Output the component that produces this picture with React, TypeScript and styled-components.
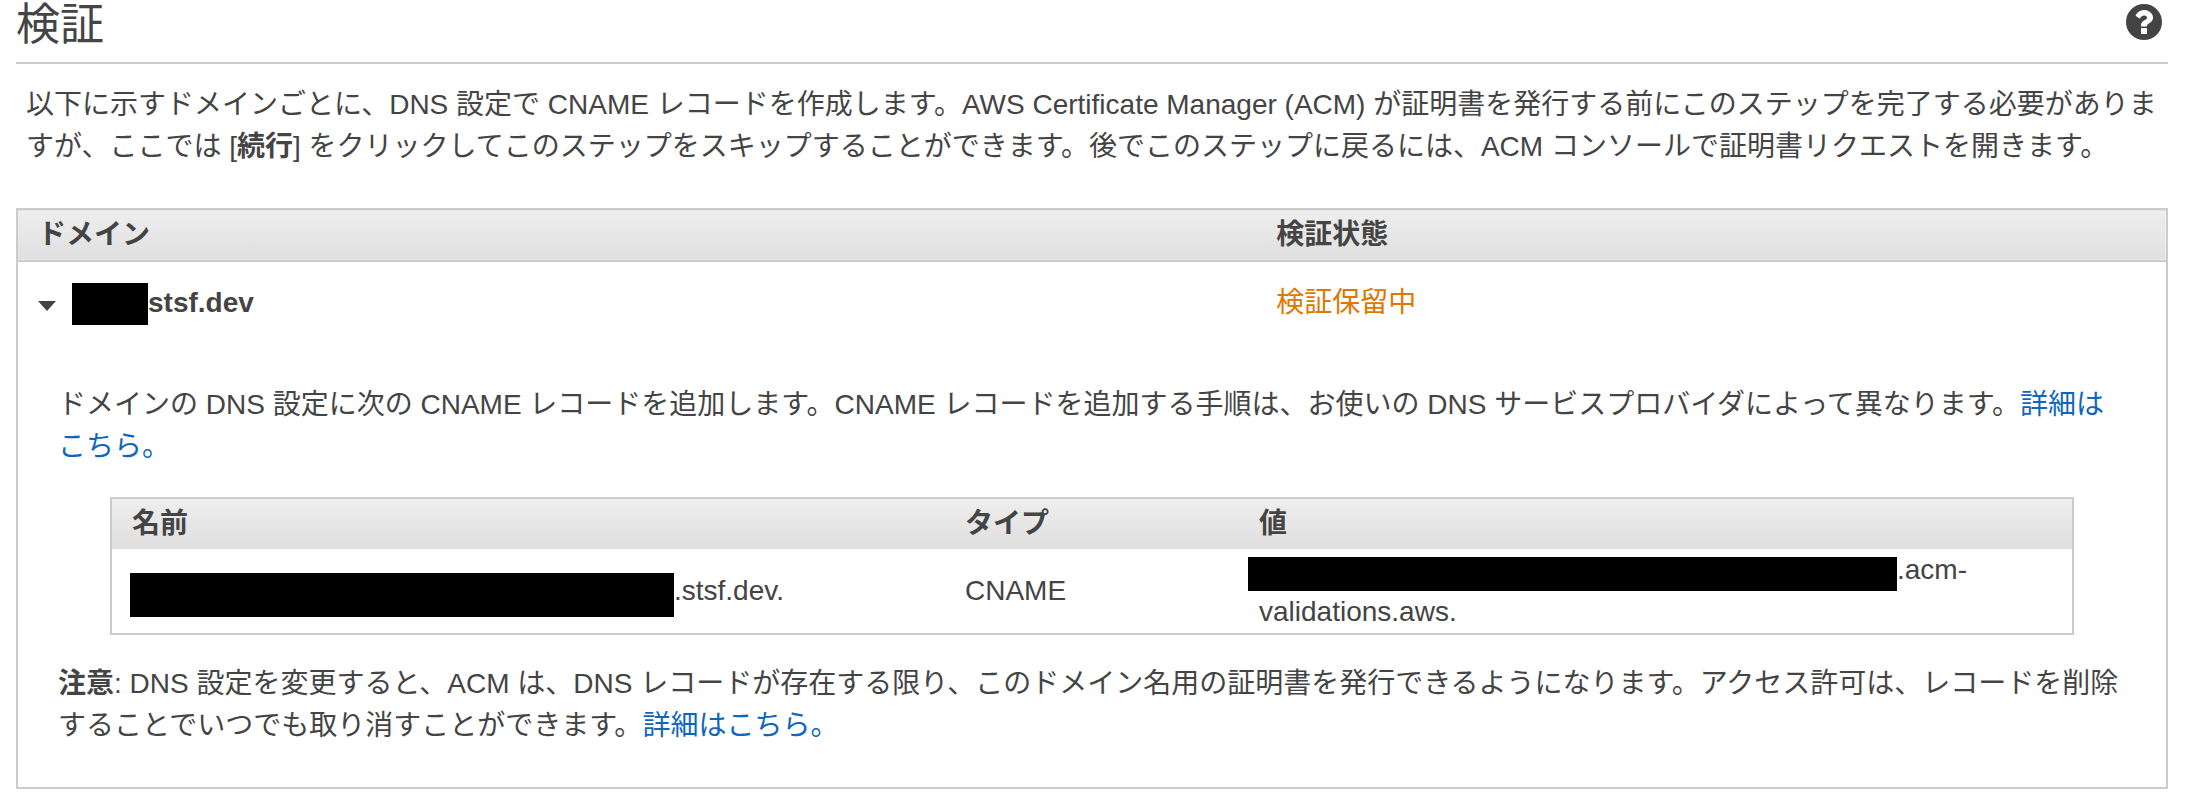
import React, { useState } from "react";
import styled, { createGlobalStyle } from "styled-components";

const INK = "#444444";
const LINE = "#cccccc";

const GlobalStyle = createGlobalStyle`
  *, *::before, *::after { box-sizing: border-box; }
  body {
    margin: 0;
    background: #ffffff;
    color: ${INK};
    font: 28px/42px "Liberation Sans", "Noto Sans CJK JP", sans-serif;
  }
`;

const Page = styled.main`
  padding: 0 30px 16px 16px;
`;

const TitleBar = styled.header`
  display: flex;
  justify-content: space-between;
  align-items: flex-start;
  padding-bottom: 12px;
  border-bottom: 2px solid ${LINE};
`;

const Title = styled.h1`
  margin: 0;
  font-size: 44px;
  font-weight: 400;
  line-height: 50px;
`;

const IconButton = styled.button`
  display: flex;
  padding: 0;
  border: 0;
  background: none;
  color: inherit;
  cursor: pointer;
`;

const HelpButton = styled(IconButton)`
  margin: 4px 6px 0 0;
`;

const Intro = styled.p`
  margin: 20px 0 40px;
  padding: 0 10px;
`;

const Table = styled.table`
  width: 100%;
  table-layout: fixed;
  border: 2px solid ${LINE};
  border-spacing: 0;
`;

const HeadCell = styled.th<{ $width?: string; $ruled?: boolean }>`
  width: ${(p) => p.$width ?? "auto"};
  padding: 4px 20px;
  text-align: left;
  font-weight: 700;
  ${(p) =>
    p.$ruled &&
    `
    border-bottom: 2px solid ${LINE};
    box-shadow: inset 0 1px #e4e4e4, inset 0 -1px #eaeaea;
  `}
`;

const HeadRow = styled.tr`
  background: linear-gradient(#eeeeee, #dfdfdf);
`;

const DomainCell = styled.td`
  padding: 20px 20px 0;
`;

const Domain = styled.div`
  display: flex;
  align-items: center;
  gap: 16px;
  font-weight: 700;
`;

const Status = styled.span`
  color: #e07700;
`;

const DetailCell = styled.td`
  padding: 60px 40px 40px;
`;

const Text = styled.p`
  margin: 0;
`;

const RecordArea = styled.div`
  padding: 29px 52px 28px;
`;

const RecordCell = styled.td`
  padding: 0 20px;
`;

const Link = styled.a`
  color: #1166bb;
  text-decoration: none;
`;

/* Masked part of a value; its negative block margins keep the line height. */
const Mask = styled.span<{ $width: number; $height: number; $drop: number; $outdent?: number }>`
  display: inline-block;
  width: ${(p) => p.$width}px;
  height: ${(p) => p.$height}px;
  margin: -10px 0 -10px -${(p) => p.$outdent ?? 0}px;
  vertical-align: ${(p) => 10 - p.$drop}px;
  background: #000000;
`;

const HelpIcon = () => (
  <svg width="36" height="36" viewBox="0 0 1536 1536" aria-hidden="true">
    <circle cx="768" cy="768" r="768" fill={INK} />
    <path
      fill="#ffffff"
      d="M896 1248v-192q0-14-9-23t-23-9h-192q-14 0-23 9t-9 23v192q0 14 9 23t23 9h192q14 0 23-9t9-23zm256-672q0-88-55.5-163t-138.5-116-170-41q-243 0-371 213-15 24 8 42l132 100q7 6 19 6 16 0 25-12 53-68 86-92 34-24 86-24 48 0 85.5 26t37.5 59q0 38-20 61t-68 45q-63 28-115.5 86.5t-52.5 125.5v36q0 14 9 23t23 9h192q14 0 23-9t9-23q0-19 21.5-49.5t54.5-49.5q32-18 49-28.5t46-35 44.5-48 28-60.5 12.5-81z"
    />
  </svg>
);

const Caret = ({ open }: { open: boolean }) => (
  <svg width="18" height="18" viewBox="0 0 18 18" aria-hidden="true">
    <path d={open ? "M0 7h18l-9 10z" : "M4 0v18l10-9z"} fill={INK} />
  </svg>
);

export default function App() {
  const [open, setOpen] = useState(true);

  return (
    <>
      <GlobalStyle />
      <Page lang="ja">
        <TitleBar>
          <Title>検証</Title>
          <HelpButton type="button" aria-label="ヘルプ">
            <HelpIcon />
          </HelpButton>
        </TitleBar>

        <Intro>
          以下に示すドメインごとに、DNS 設定で CNAME レコードを作成します。AWS Certificate Manager (ACM)
          が証明書を発行する前にこのステップを完了する必要がありますが、ここでは [<b>続行</b>]
          をクリックしてこのステップをスキップすることができます。後でこのステップに戻るには、ACM
          コンソールで証明書リクエストを開きます。
        </Intro>

        <Table>
          <thead>
            <HeadRow>
              <HeadCell scope="col" $width="57.65%" $ruled>ドメイン</HeadCell>
              <HeadCell scope="col" $ruled>検証状態</HeadCell>
            </HeadRow>
          </thead>
          <tbody>
            <tr>
              <DomainCell>
                <Domain>
                  <IconButton
                    type="button"
                    aria-label="詳細を表示"
                    aria-expanded={open}
                    onClick={() => setOpen(!open)}
                  >
                    <Caret open={open} />
                  </IconButton>
                  <span>
                    <Mask $width={76} $height={42} $drop={13} />
                    stsf.dev
                  </span>
                </Domain>
              </DomainCell>
              <DomainCell>
                <Status>検証保留中</Status>
              </DomainCell>
            </tr>
            {open && (
              <tr>
                <DetailCell colSpan={2}>
                  <Text>
                    ドメインの DNS 設定に次の CNAME レコードを追加します。CNAME
                    レコードを追加する手順は、お使いの DNS サービスプロバイダによって異なります。
                    <Link href="#dns">詳細はこちら。</Link>
                  </Text>
                  <RecordArea>
                    <Table>
                      <thead>
                        <HeadRow>
                          <HeadCell scope="col" $width="42.5%">名前</HeadCell>
                          <HeadCell scope="col" $width="15%">タイプ</HeadCell>
                          <HeadCell scope="col">値</HeadCell>
                        </HeadRow>
                      </thead>
                      <tbody>
                        <tr>
                          <RecordCell>
                            <Mask $width={544} $height={44} $drop={17} $outdent={2} />
                            .stsf.dev.
                          </RecordCell>
                          <RecordCell>CNAME</RecordCell>
                          <RecordCell>
                            <Mask $width={649} $height={34} $drop={12} $outdent={11} />
                            .acm-validations.aws.
                          </RecordCell>
                        </tr>
                      </tbody>
                    </Table>
                  </RecordArea>
                  <Text>
                    <b>注意</b>: DNS 設定を変更すると、ACM は、DNS
                    レコードが存在する限り、このドメイン名用の証明書を発行できるようになります。アクセス許可は、レコードを削除することでいつでも取り消すことができます。
                    <Link href="#note">詳細はこちら。</Link>
                  </Text>
                </DetailCell>
              </tr>
            )}
          </tbody>
        </Table>
      </Page>
    </>
  );
}
